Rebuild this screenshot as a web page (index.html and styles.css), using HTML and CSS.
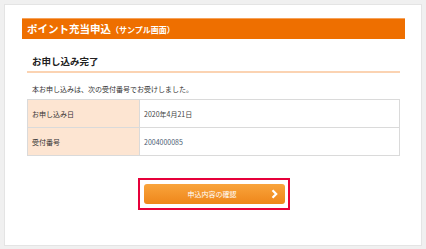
FILE: index.html
```html
<!DOCTYPE html>
<html lang="ja">
  <head>
    <meta charset="utf-8" />
    <meta name="viewport" content="width=device-width, initial-scale=1.0" />
    <title>ポイント充当申込（サンプル画面）</title>
    <link rel="stylesheet" href="styles.css">
  </head>
  <body>
    <div class="panel">
      <h1 class="page-title">ポイント充当申込<span class="sub">（サンプル画面）</span></h1>
      <div class="content">
        <h2 class="section-title">お申し込み完了</h2>
        <p class="lead">本お申し込みは、次の受付番号でお受けしました。</p>
        <table class="info">
          <tr>
            <th>お申し込み日</th>
            <td class="date">2020年4月21日</td>
          </tr>
          <tr>
            <th>受付番号</th>
            <td class="number">2004000085</td>
          </tr>
        </table>
        <div class="actions">
          <div class="highlight">
            <a class="confirm-btn" href="#">
              <span>申込内容の確認</span>
              <svg class="chev" width="7" height="10" viewBox="0 0 7 10">
                <path d="M1.5 1.2 L5.2 5 L1.5 8.8" fill="none" stroke="#fff" stroke-width="2.2" />
              </svg>
            </a>
          </div>
        </div>
      </div>
    </div>
  </body>
</html>
```

FILE: styles.css
```css
* {
  margin: 0;
  padding: 0;
  box-sizing: border-box;
  font-family: "Noto Sans CJK JP", "Noto Sans", sans-serif;
}
body {
  background: #f0f0f0;
  padding: 4px;
  width: 426px;
  height: 249px;
}
.panel {
  background: #fff;
  border: 1px solid #e4e4e4;
  height: 242px;
  padding: 13px 16px 0 17px;
}
.page-title {
  background: #ee6f00;
  border-top: 1px solid #f6a25a;
  color: #fff;
  font-size: 10.5px;
  font-weight: bold;
  height: 21px;
  line-height: 20px;
  padding-left: 5px;
}
.page-title .sub {
  font-size: 8px;
}
.content {
  margin: 0 5px;
}
.section-title {
  font-size: 9.5px;
  font-weight: bold;
  color: #222;
  line-height: 13px;
  padding: 16px 5px 3px;
  border-bottom: 2px solid #fbd3b2;
}
.lead {
  font-size: 7px;
  line-height: 10px;
  color: #333;
  margin: 11px 5px 5px;
}
.info {
  width: 100%;
  border-collapse: collapse;
  font-size: 7px;
}
.info th,
.info td {
  border: 1px solid #dadada;
  height: 28px;
  text-align: left;
  font-weight: normal;
  padding: 0 4px;
}
.info th {
  width: 112px;
  background: #fde5d2;
  color: #333;
}
.info td.date {
  color: #444;
}
.info td.number {
  color: #4a5b72;
}
.actions {
  display: flex;
  justify-content: center;
  margin-top: 22px;
}
.highlight {
  border: 2px solid #e6003a;
  padding: 4px 3px 4px 4px;
}
.confirm-btn {
  display: flex;
  align-items: center;
  justify-content: center;
  position: relative;
  width: 141px;
  height: 20px;
  border-radius: 3px;
  background: linear-gradient(#f9a43c, #ef861a);
  color: #fff;
  font-size: 7px;
  text-decoration: none;
}
.confirm-btn span {
  margin-right: 4px;
}
.chev {
  position: absolute;
  right: 7px;
  top: 5px;
}
```
